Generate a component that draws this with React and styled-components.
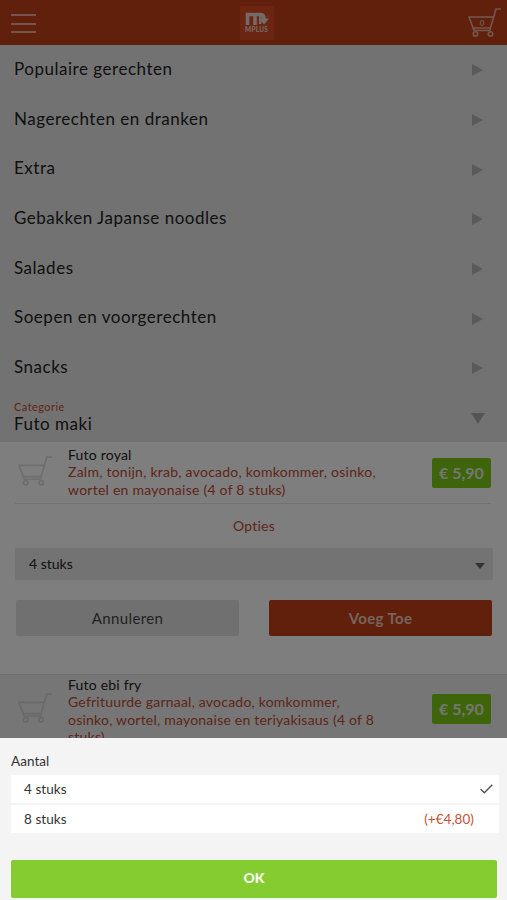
import React, { useState } from "react";
import styled, { createGlobalStyle } from "styled-components";

const GlobalStyle = createGlobalStyle`
  * {
    box-sizing: border-box;
  }
  body {
    margin: 0;
    overflow: hidden;
    font-family: Lato, "Liberation Sans", sans-serif;
    color: #222;
  }
  button {
    font-family: inherit;
    border: none;
    padding: 0;
  }
`;

const Page = styled.div`
  position: relative;
  width: 100%;
  height: 900px;
  overflow: hidden;
  background: #fcfcfc;
`;

const Header = styled.header`
  height: 45px;
  padding: 0 5px 0 11px;
  display: grid;
  grid-template-columns: 1fr 34px 1fr;
  align-items: center;
  background: #c04018;
  & > :last-child {
    justify-self: end;
  }
`;

const MenuButton = styled.button`
  width: 25px;
  height: 19px;
  margin-top: 2px;
  display: flex;
  flex-direction: column;
  justify-content: space-between;
  background: none;
  span {
    height: 2px;
    background: #e9ad98;
  }
`;

const Logo = styled.div`
  width: 34px;
  height: 34px;
  margin-top: 1px;
  display: flex;
  flex-direction: column;
  align-items: center;
  padding-top: 6px;
  background: #d64a20;
  color: #e8d5cf;
  span {
    font-size: 6.5px;
    font-weight: 900;
    line-height: 8px;
    letter-spacing: 0.2px;
    margin-top: 1px;
  }
`;

const CategoryRow = styled.div`
  height: ${(props) => (props.$open ? "49.3px" : "49.7px")};
  padding: 0 ${(props) => (props.$open ? "22px" : "24px")} 0 14px;
  display: flex;
  align-items: center;
  justify-content: space-between;
  background: #e5e5e5;
  font-size: 17px;
  line-height: 19px;
  letter-spacing: 0.52px;
  .name {
    display: flex;
    flex-direction: column;
    padding-bottom: ${(props) => (props.$open ? "2px" : "3px")};
  }
  small {
    color: #c04a30;
    font-size: 11px;
    line-height: 14px;
    letter-spacing: 0.45px;
  }
`;

const Triangle = styled.i`
  width: 0;
  height: 0;
  margin-top: ${(props) => (props.$down ? "2px" : "1px")};
  border-style: solid;
  border-color: transparent;
  ${(props) =>
    props.$down
      ? `border-width: ${props.$height}px ${props.$half}px 0;
         border-top-color: ${props.$color};`
      : `border-width: ${props.$half}px 0 ${props.$half}px ${props.$height}px;
         border-left-color: ${props.$color};`}
`;

const Product = styled.article`
  height: ${(props) => (props.$odd ? "100px" : "232px")};
  background: ${(props) => (props.$odd ? "#ececec" : "#fcfcfc")};
  border-top: 1px solid ${(props) => (props.$odd ? "#e0e0e0" : "#fcfcfc")};
`;

const ProductInfo = styled.div`
  display: grid;
  grid-template-columns: 53px 1fr 59px;
  align-items: start;
  height: 61px;
  margin: 0 16px 0 15px;
  border-bottom: 1px solid ${(props) => (props.$line ? "#e2e2e2" : "transparent")};
  & > svg {
    margin: ${(props) => (props.$line ? "13px" : "18px")} 0 0 3px;
  }
`;

const ProductText = styled.div`
  padding-top: ${(props) => (props.$odd ? "1px" : "3px")};
  font-size: 14px;
  line-height: 17.3px;
  letter-spacing: 0.2px;
  white-space: nowrap;
  p {
    margin: 0;
    color: #c04a34;
    letter-spacing: ${(props) => (props.$odd ? "0.22px" : "0.25px")};
  }
`;

const Price = styled.div`
  height: 30px;
  margin-top: ${(props) => (props.$odd ? "19px" : "15px")};
  line-height: 29px;
  text-align: center;
  font-size: 16px;
  font-weight: 700;
  border-radius: 2px;
  color: #e9efdf;
  background: #7cc818;
`;

const Options = styled.div`
  padding: 12px 14px 0 15px;
  h3 {
    margin: 0 0 13px;
    text-align: center;
    font-size: 14px;
    line-height: 19px;
    font-weight: 400;
    letter-spacing: 0.25px;
    color: #c04a34;
  }
`;

const Select = styled.div`
  height: 32px;
  padding: 0 8px 2px 14px;
  display: flex;
  align-items: center;
  justify-content: space-between;
  background: #e6e6e6;
  font-size: 14px;
  & > i {
    margin-top: 6px;
  }
`;

const Actions = styled.div`
  display: grid;
  grid-template-columns: 1fr 1fr;
  gap: 30px;
  padding: 20px 1px 0;
`;

const Action = styled.button`
  height: 36px;
  padding-bottom: 1px;
  border-radius: 2px;
  font-size: 15px;
  letter-spacing: 0.35px;
  font-weight: ${(props) => (props.$primary ? 700 : 400)};
  color: ${(props) => (props.$primary ? "#ecc8b8" : "#444")};
  background: ${(props) => (props.$primary ? "#c04018" : "#e1e1e1")};
`;

const Scrim = styled.div`
  position: absolute;
  inset: 0;
  background: rgba(0, 0, 0, 0.5);
`;

const Sheet = styled.section`
  position: absolute;
  left: 0;
  right: 0;
  bottom: 0;
  height: 162px;
  padding: 14px 8px 0 11px;
  background: #f4f4f4;
  font-size: 13.5px;
  letter-spacing: 0.05px;
  color: #333;
  h4 {
    margin: 0 0 4px;
    font-size: 13.5px;
    line-height: 19px;
    font-weight: 400;
  }
`;

const Choice = styled.div`
  height: 28px;
  margin-bottom: 2px;
  padding: 0 6px 1px 13px;
  display: flex;
  align-items: center;
  justify-content: space-between;
  background: #fff;
  span:last-child {
    margin-right: 19px;
    color: #c94f32;
  }
`;

const OkButton = styled.button`
  display: block;
  width: calc(100% - 2px);
  height: 38px;
  margin-top: 27px;
  padding-bottom: 3px;
  border-radius: 2px;
  font-size: 14px;
  font-weight: 900;
  color: #f7fbf0;
  background: #84cc30;
`;

const Cart = ({ width, height, color, count }) => (
  <svg width={width} height={height} viewBox="0 0 34 30" fill="none" stroke={color} strokeWidth="1.6">
    <path d="M33 1h-5l-6.3 21.5H6L1 9h24.5M5 20h17.5" />
    <circle cx="7.5" cy="26" r="2.2" />
    <circle cx="22.5" cy="26" r="2.2" />
    {count !== undefined && (
      <text x="14" y="18.2" textAnchor="middle" fontSize="8" fontWeight="700" fill={color} stroke="none">
        {count}
      </text>
    )}
  </svg>
);

const categories = [
  "Populaire gerechten",
  "Nagerechten en dranken",
  "Extra",
  "Gebakken Japanse noodles",
  "Salades",
  "Soepen en voorgerechten",
  "Snacks",
];

const choices = [
  { label: "4 stuks" },
  { label: "8 stuks", extra: "(+€4,80)" },
];

const App = () => {
  const [selected, setSelected] = useState(0);
  return (
    <Page>
      <GlobalStyle />
      <Header>
        <MenuButton aria-label="Menu">
          <span />
          <span />
          <span />
        </MenuButton>
        <Logo>
          <svg width="24" height="13" viewBox="0 0 24 13" fill="none" stroke="currentColor" strokeWidth="3.6">
            <path d="M2.5 13V2.5H8q2 0 2 2V13M10 2.5h5q4 0 4 4V8" />
            <path d="M14 6.5h10L19 12.5z" fill="currentColor" stroke="none" />
            <path d="M15.2 3v9" strokeWidth="2.5" />
          </svg>
          <span>MPLUS</span>
        </Logo>
        <Cart width={34} height={30} color="#e9ad98" count={0} />
      </Header>
      {categories.map((name) => (
        <CategoryRow key={name}>
          <div className="name">{name}</div>
          <Triangle $half={6.5} $height={11} $color="#b5b5b5" />
        </CategoryRow>
      ))}
      <CategoryRow $open>
        <div className="name">
          <small>Categorie</small>
          Futo maki
        </div>
        <Triangle $down $half={7} $height={11} $color="#aaa" />
      </CategoryRow>
      <Product>
        <ProductInfo $line>
          <Cart width={35} height={31} color="#dcdcdc" />
          <ProductText>
            Futo royal
            <p>
              Zalm, tonijn, krab, avocado, komkommer, osinko,
              <br />
              wortel en mayonaise (4 of 8 stuks)
            </p>
          </ProductText>
          <Price>€ 5,90</Price>
        </ProductInfo>
        <Options>
          <h3>Opties</h3>
          <Select>
            {choices[selected].label}
            <Triangle $down $half={5} $height={6} $color="#666" />
          </Select>
          <Actions>
            <Action>Annuleren</Action>
            <Action $primary>Voeg Toe</Action>
          </Actions>
        </Options>
      </Product>
      <Product $odd>
        <ProductInfo>
          <Cart width={35} height={31} color="#d2d2d2" />
          <ProductText $odd>
            Futo ebi fry
            <p>
              Gefrituurde garnaal, avocado, komkommer,
              <br />
              osinko, wortel, mayonaise en teriyakisaus (4 of 8
              <br />
              stuks)
            </p>
          </ProductText>
          <Price $odd>€ 5,90</Price>
        </ProductInfo>
      </Product>
      <Scrim />
      <Sheet>
        <h4>Aantal</h4>
        {choices.map((choice, index) => (
          <Choice key={choice.label} onClick={() => setSelected(index)}>
            {choice.label}
            {index === selected ? (
              <svg width="13" height="10" viewBox="0 0 13 10" fill="none" stroke="#555" strokeWidth="1.5">
                <path d="M.7 5.2l3.6 3.6L12.3.8" />
              </svg>
            ) : (
              <span>{choice.extra}</span>
            )}
          </Choice>
        ))}
        <OkButton>OK</OkButton>
      </Sheet>
    </Page>
  );
};

export default App;
